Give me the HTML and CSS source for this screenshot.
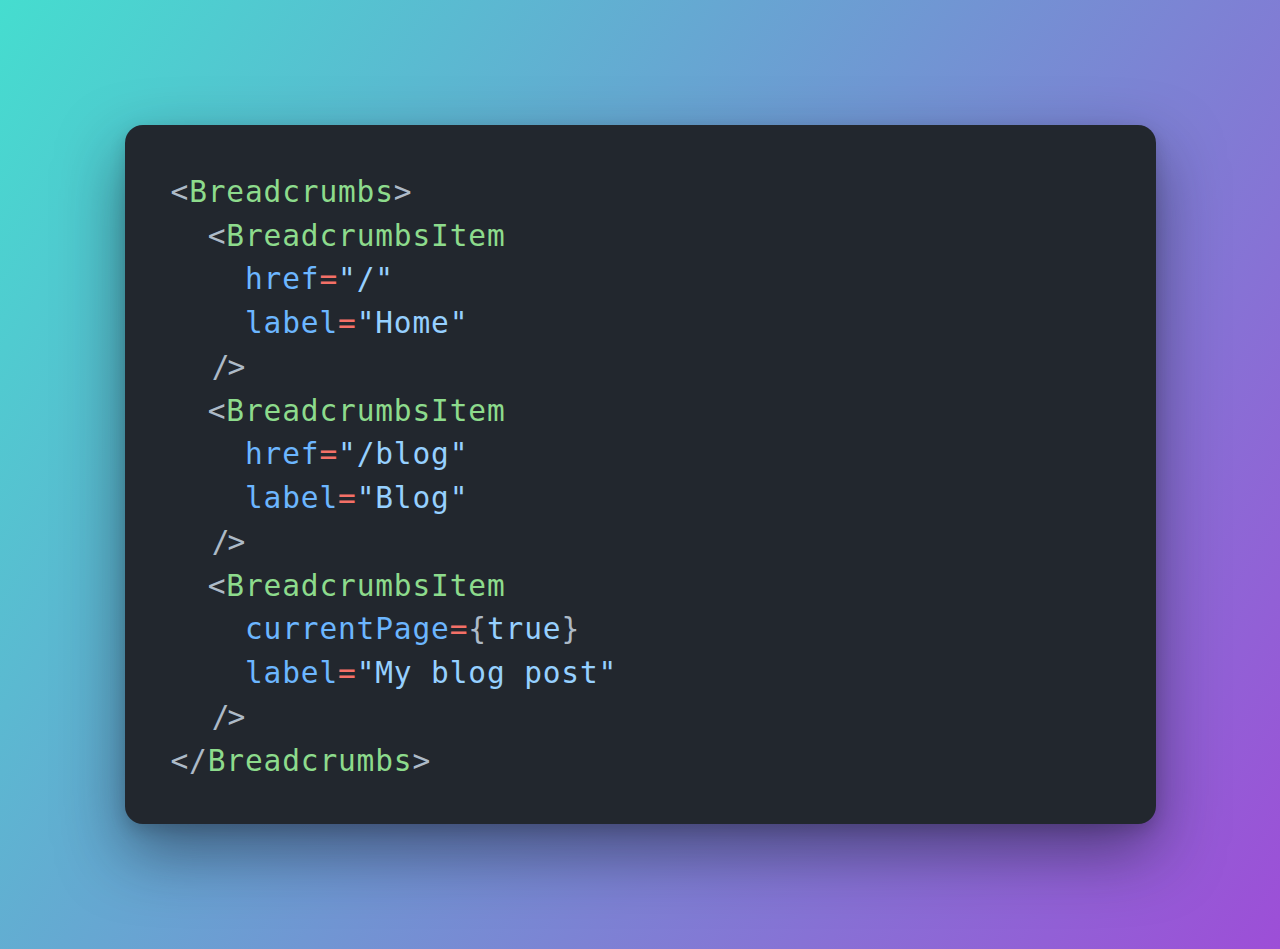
FILE: index.html
```html
<!DOCTYPE html>
<html lang="en">
<head>
<meta charset="utf-8">
<title>Breadcrumbs</title>
<link rel="stylesheet" href="styles.css">
</head>
<body>
<main class="stage">
  <section class="card">
    <pre class="code"><code><span class="line"><span class="p">&lt;</span><span class="t">Breadcrumbs</span><span class="p">&gt;</span></span>
<span class="line">  <span class="p">&lt;</span><span class="t">BreadcrumbsItem</span></span>
<span class="line">    <span class="a">href</span><span class="o">=</span><span class="s">"/"</span></span>
<span class="line">    <span class="a">label</span><span class="o">=</span><span class="s">"Home"</span></span>
<span class="line">  <span class="p close">/&gt;</span></span>
<span class="line">  <span class="p">&lt;</span><span class="t">BreadcrumbsItem</span></span>
<span class="line">    <span class="a">href</span><span class="o">=</span><span class="s">"/blog"</span></span>
<span class="line">    <span class="a">label</span><span class="o">=</span><span class="s">"Blog"</span></span>
<span class="line">  <span class="p close">/&gt;</span></span>
<span class="line">  <span class="p">&lt;</span><span class="t">BreadcrumbsItem</span></span>
<span class="line">    <span class="a">currentPage</span><span class="o">=</span><span class="p">{</span><span class="s">true</span><span class="p">}</span></span>
<span class="line">    <span class="a">label</span><span class="o">=</span><span class="s">"My blog post"</span></span>
<span class="line">  <span class="p close">/&gt;</span></span>
<span class="line"><span class="p">&lt;/</span><span class="t">Breadcrumbs</span><span class="p">&gt;</span></span></code></pre>
  </section>
</main>
</body>
</html>
```

FILE: styles.css
```css
html, body {
  margin: 0;
  padding: 0;
}

body {
  width: 1280px;
  height: 949px;
  overflow: hidden;
  background: linear-gradient(124deg, #45ddcf 0%, #9d4ed7 100%);
}

.stage {
  width: 1280px;
  height: 949px;
  display: flex;
  align-items: center;
  justify-content: center;
}

.card {
  width: 1031px;
  box-sizing: border-box;
  padding: 46px 43px 41px 46px;
  background: #22272e;
  border-radius: 18px;
  box-shadow: 0 28px 64px rgba(20, 22, 40, 0.5), 0 6px 16px rgba(0, 0, 0, 0.15);
}

.code {
  margin: 0;
  font-family: "DejaVu Sans Mono", "Liberation Mono", monospace;
  font-size: 29.5px;
  letter-spacing: 0.85px;
  line-height: 43.75px;
  color: #adbac7;
  white-space: pre;
}

.code code {
  font: inherit;
}

.line {
  display: inline;
}

.t { color: #8ddb8c; }
.a { color: #6cb6ff; }
.o { color: #f47067; }
.s { color: #96d0ff; }
.p { color: #adbac7; }
.close { padding-left: 4px; letter-spacing: -2px; }
```
